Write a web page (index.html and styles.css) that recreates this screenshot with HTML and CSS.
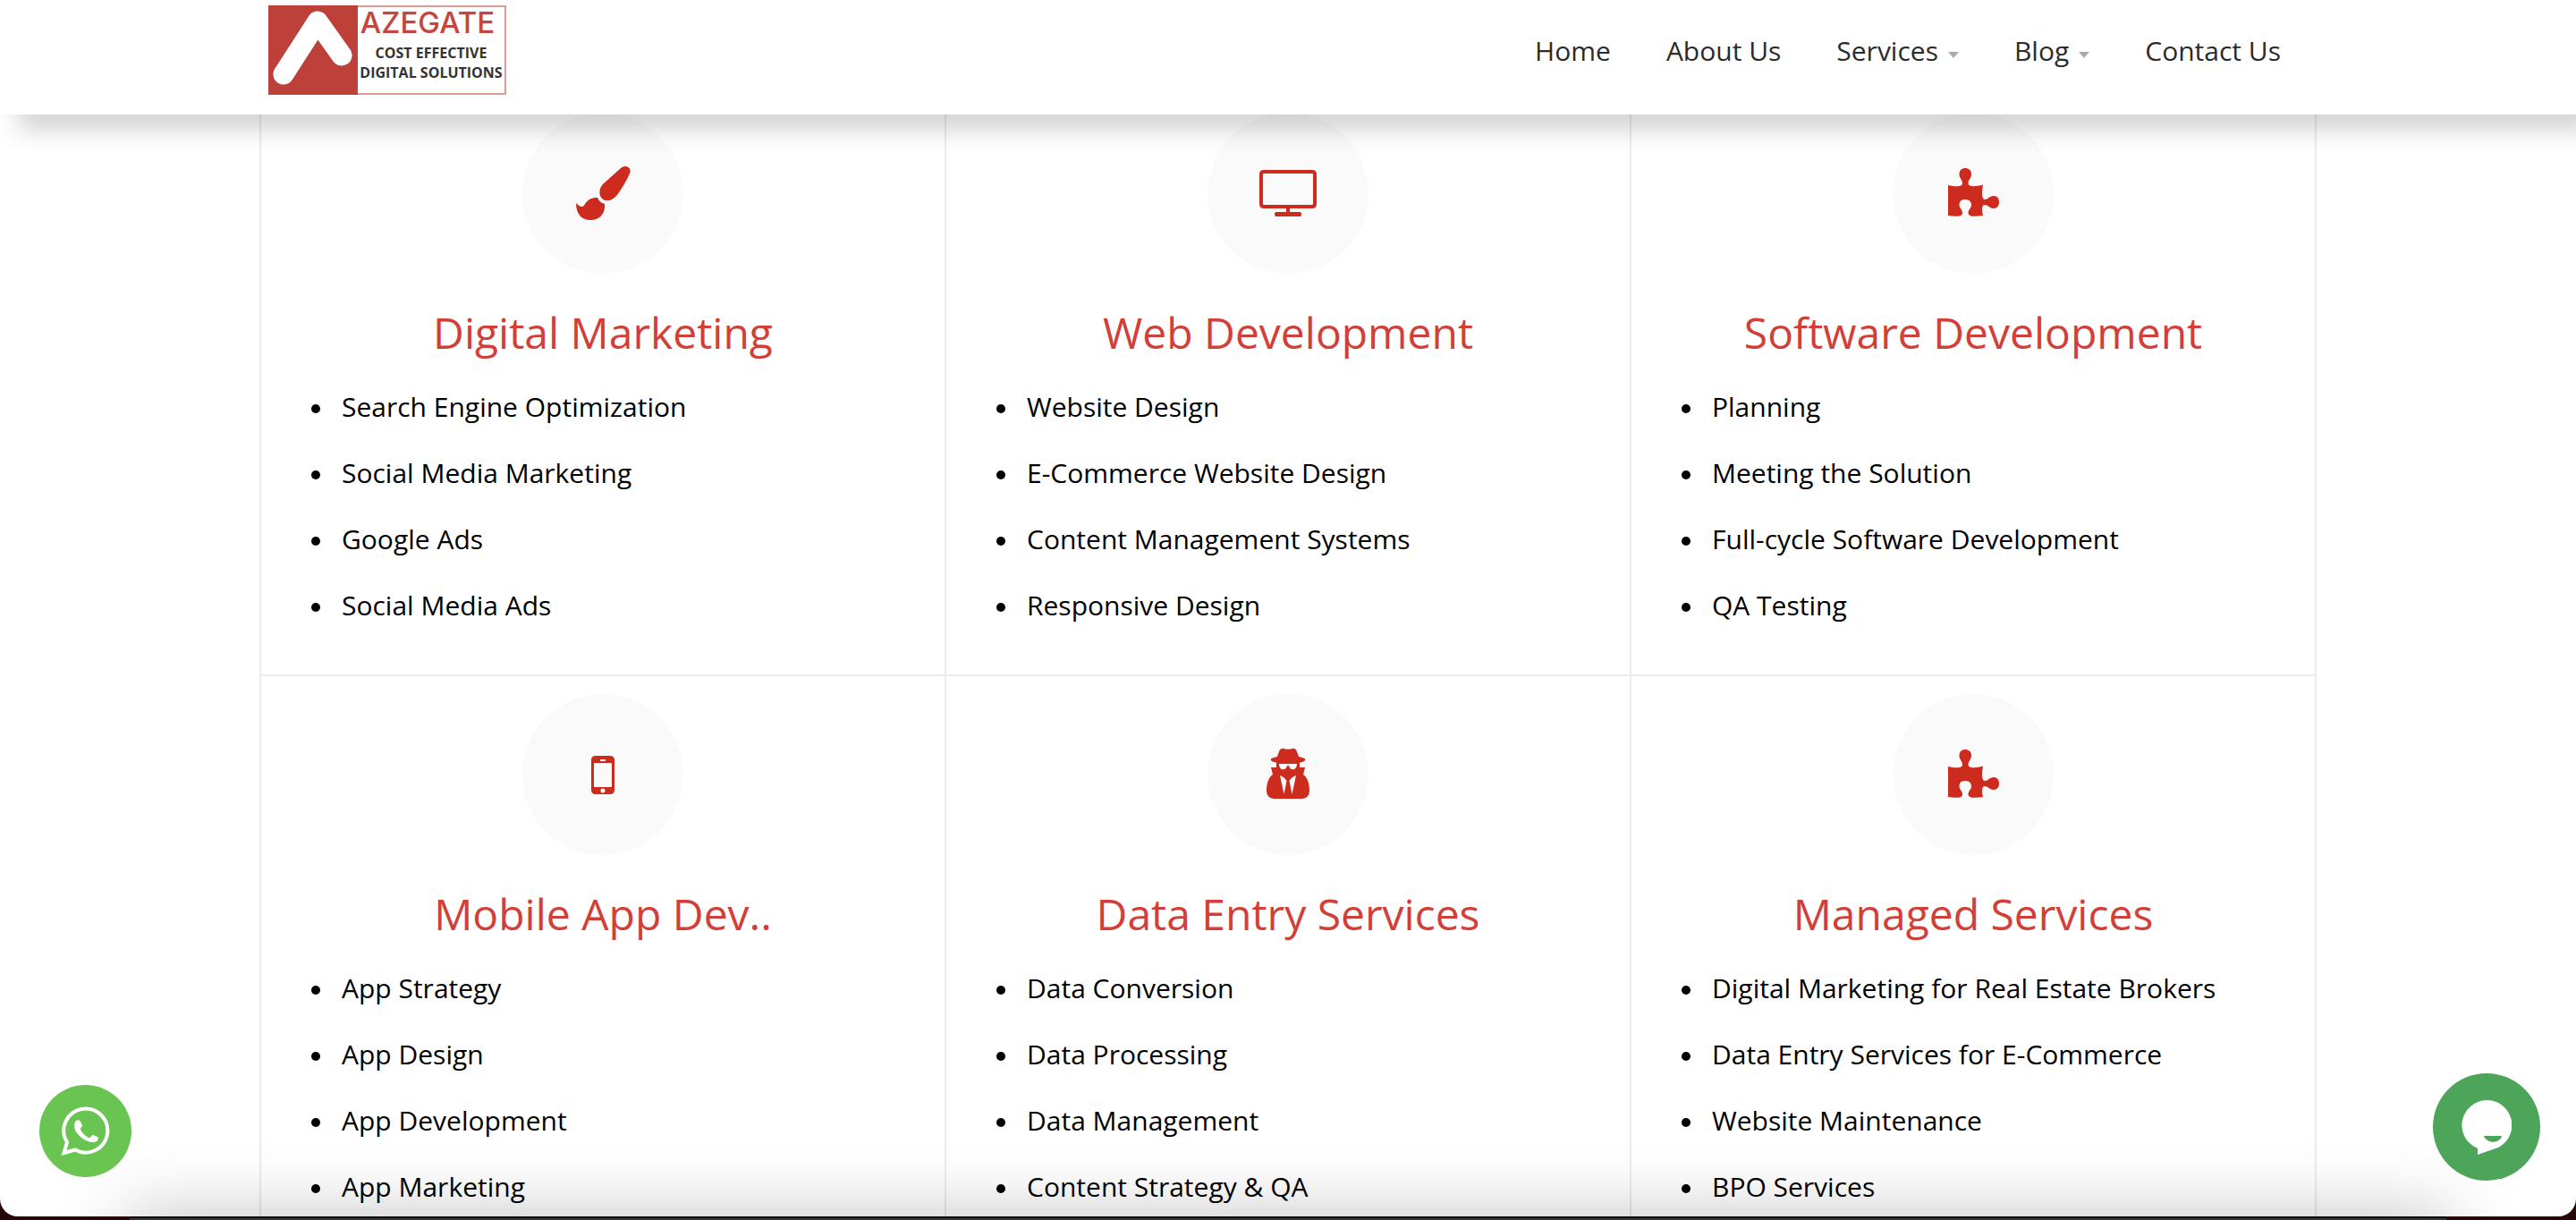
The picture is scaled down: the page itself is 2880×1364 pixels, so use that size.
FILE: index.html
```html
<!DOCTYPE html>
<html lang="en">
<head>
<meta charset="utf-8">
<title>Azegate - Services</title>
<link rel="stylesheet" href="styles.css">
</head>
<body>
<svg class="sprite" aria-hidden="true">
  <symbol id="puzzle" viewBox="0 0 64 60">
    <path d="M4 21C12 23 20 23 20 19C20 15 16.500 13 16.500 9C16.500 4 19.500 2 23 2C27 2 30 4 30 9C30 13 26.500 15 26.500 19C26.500 23 35 23 43 20.500C42 26 41 37 45 37C49 37 50 33 55 33C59 33 61 36 61 40C61 44 59 47 55 47C50 47 49 43 45 43C41 43 42 50 43 55C36 56 26.500 57 26.500 52C26.500 48 30 47 30 43C30 39 27 37 23 37C19 37 16.500 39 16.500 43C16.500 47 20 48 20 52C20 57 12 56 4 55Z"/>
  </symbol>
</svg>
<div class="window">
  <header class="site-header">
    <div class="container header-row">
      <a class="logo" href="#" aria-label="Azegate home">
        <svg class="logo-mark" viewBox="0 0 100 100" aria-hidden="true">
          <path d="M17 77L55 18L82 56" fill="none" stroke="#fff" stroke-width="23" stroke-linecap="round" stroke-linejoin="round"/>
        </svg>
        <span class="logo-text">
          <span class="logo-name">AZEGATE</span>
          <span class="logo-line">COST EFFECTIVE</span>
          <span class="logo-line">DIGITAL SOLUTIONS</span>
        </span>
      </a>
      <nav class="nav">
        <a href="#">Home</a>
        <a href="#">About Us</a>
        <a class="has-menu" href="#">Services</a>
        <a class="has-menu" href="#">Blog</a>
        <a href="#">Contact Us</a>
      </nav>
    </div>
  </header>

  <main class="container services">
    <section class="card">
      <div class="badge"><svg width="64" height="64" viewBox="0 0 64 64"><path d="M28.500 32C28 27 30 24 33 21L52 4C58-1 65 4 62 10C58 19 53 27 48 34C40 44 29 41 28.500 32ZM26 37C20 37 16 38 12 44C10 48 7 48 2 43C2 55 8 62 18 62C29 62 35 54 34 44C30 43 28 41 26 37Z"/></svg></div>
      <h2>Digital Marketing</h2>
      <ul><li>Search Engine Optimization</li><li>Social Media Marketing</li><li>Google Ads</li><li>Social Media Ads</li></ul>
    </section>
    <section class="card">
      <div class="badge"><svg width="64" height="64" viewBox="0 0 64 64"><path d="M5 6H59Q64 6 64 11V44Q64 49 59 49H34V53H45Q47 53 47 55V56Q47 58 45 58H19Q17 58 17 56V55Q17 53 19 53H30V49H5Q0 49 0 44V11Q0 6 5 6ZM4 11V44Q4 45 5 45H59Q60 45 60 44V11Q60 10 59 10H5Q4 10 4 11Z"/></svg></div>
      <h2>Web Development</h2>
      <ul><li>Website Design</li><li>E-Commerce Website Design</li><li>Content Management Systems</li><li>Responsive Design</li></ul>
    </section>
    <section class="card">
      <div class="badge"><svg width="64" height="60"><use href="#puzzle"/></svg></div>
      <h2>Software Development</h2>
      <ul><li>Planning</li><li>Meeting the Solution</li><li>Full-cycle Software Development</li><li>QA Testing</li></ul>
    </section>
    <section class="card">
      <div class="badge"><svg width="26" height="43" viewBox="0 0 26 43"><path fill-rule="evenodd" d="M5 0H21Q26 0 26 5V38Q26 43 21 43H5Q0 43 0 38V5Q0 0 5 0ZM10 4V6H16V4ZM4 8Q3 8 3 9V34Q3 35 4 35H22Q23 35 23 34V9Q23 8 22 8ZM13 36.500A2.500 2.500 0 1 0 13 41.500A2.500 2.500 0 1 0 13 36.500Z"/></svg></div>
      <h2>Mobile App Dev..</h2>
      <ul><li>App Strategy</li><li>App Design</li><li>App Development</li><li>App Marketing</li></ul>
    </section>
    <section class="card">
      <div class="badge"><svg width="48" height="60" viewBox="0 0 48 60"><path fill-rule="evenodd" d="M5 14C4 11 9 11 12 10C14 4 15 0 19 1C22 2 26 2 29 1C33 0 34 4 36 10C39 11 44 11 43 14C42 16 39 16 37 16.500V22H43L41 30C46 33 48 41 48 48C48 54 44 57 39 57H9C4 57 0 54 0 48C0 41 2 33 7 30L5 22H11V16.500C9 16 6 16 5 14ZM14 18C14 26 22 26 23 20H25C26 26 34 26 34 18ZM15 31L19.500 52L22.500 37C21 34 18 32 15 31ZM33 31C30 32 27 34 25.500 37L28.500 52Z"/></svg></div>
      <h2>Data Entry Services</h2>
      <ul><li>Data Conversion</li><li>Data Processing</li><li>Data Management</li><li>Content Strategy &amp; QA</li></ul>
    </section>
    <section class="card">
      <div class="badge"><svg width="64" height="60"><use href="#puzzle"/></svg></div>
      <h2>Managed Services</h2>
      <ul><li>Digital Marketing for Real Estate Brokers</li><li>Data Entry Services for E-Commerce</li><li>Website Maintenance</li><li>BPO Services</li></ul>
    </section>
  </main>
  <div class="dock-shade"></div>
  <a class="whatsapp" href="#" aria-label="WhatsApp">
    <svg width="56" height="56" viewBox="0 0 56 56" aria-hidden="true"><path d="M3.500 52L7 40A24.500 24.500 0 1 1 16 48.500Z" fill="none" stroke="#fff" stroke-width="4"/><path d="M17 16C19 15 21 15 22 17L24 21C24 23 21 24 22 26C24 30 27 33 31 35C33 36 34 32 36 32L41 34C43 35 41 38 40 39C37 41 32 40 28 38C22 35 17 30 15.500 25C15 21 15 18 17 16Z" fill="#fff"/></svg>
  </a>
  <button class="chat" type="button" aria-label="Open chat">
    <svg width="56" height="62" viewBox="0 0 56 62" aria-hidden="true"><path d="M18 62V55A28 28 0 1 1 41 54Z" fill="#fff"/><path d="M25 41H45C43 50 28 50 25 41Z" fill="#4ca558"/></svg>
  </button>
</div>
<div class="dock-edge"></div>
</body>
</html>
```
FILE: styles.css
```css
* { box-sizing: border-box; }
html { height: 100%; overflow: hidden; background: #24060b; }
body { display: flex; flex-direction: column; height: 100%; margin: 0; font-family: "Open Sans", "Noto Sans", sans-serif; color: #000; }
a { color: inherit; text-decoration: none; }
.sprite { position: absolute; width: 0; height: 0; }

.window { position: relative; flex: 1; min-height: 0; overflow: hidden; background: #fff; border-radius: 0 0 20px 20px; }
.container { width: 80%; max-width: 2300px; min-width: 1400px; margin: 0 auto; }

.site-header { position: relative; z-index: 2; height: 128px; background: #fff; box-shadow: 20px 18px 24px rgba(0, 0, 0, .17); }
.header-row { display: flex; justify-content: space-between; align-items: flex-start; padding: 6px 40px 0 10px; }
.logo { display: flex; width: 266px; height: 100px; background: #bd4039; }
.logo-mark { width: 100px; height: 100px; flex: none; }
.logo-text { flex: 1; display: flex; flex-direction: column; align-items: center; border: 2px solid #df9a96; border-left: 0; background: #fff; white-space: nowrap; }
.logo-name { margin-bottom: 6px; padding-right: 8px; font: 500 33px/34px Inter, "Open Sans", sans-serif; color: #c4473f; }
.logo-line { font: 700 16px/22px "Open Sans", sans-serif; color: #333; }
.nav { display: flex; gap: 62px; font-size: 30px; line-height: 44px; padding-top: 29px; color: #2b2b2b; }
.has-menu { display: flex; align-items: center; gap: 11px; }
.has-menu::after { content: ""; margin-top: 8px; border: 6px solid transparent; border-top: 7px solid #aaa; border-bottom: 0; }

.services { display: grid; grid-template-columns: repeat(3, 1fr); border-left: 2px solid #ececec; margin-top: -22px; }
.card { height: 650px; padding: 20px 56px 0; border-right: 2px solid #ececec; border-bottom: 2px solid #ececec; }
.badge { display: flex; align-items: center; justify-content: center; width: 180px; height: 180px; margin: 0 auto; border-radius: 50%; background: #fafafa; fill: #cc2b1d; }
h2 { margin: 33px 0 0; font-size: 48px; line-height: 66px; font-weight: 400; text-align: center; color: #d23f38; }
ul { margin: 13px 0 0; padding: 0; list-style: none; font-size: 30px; line-height: 74px; }
li { display: flex; align-items: center; gap: 24px; }
li::before { content: ""; width: 10px; height: 10px; margin-top: 4px; border-radius: 50%; background: #000; }

.dock-shade { position: absolute; left: 140px; right: 140px; bottom: -80px; height: 80px; box-shadow: 0 0 80px rgba(0, 0, 0, .25); }
.dock-edge { height: 4px; margin: 0 145px; border-top: 2px solid #000; background: #3d3537; }
.whatsapp, .chat { position: absolute; display: flex; align-items: center; justify-content: center; border: 0; padding: 0; border-radius: 50%; }
.whatsapp { left: 44px; bottom: 44px; width: 103px; height: 103px; background: #6ac452; }
.chat { right: 40px; bottom: 40px; width: 120px; height: 120px; background: #4ca558; }
```
